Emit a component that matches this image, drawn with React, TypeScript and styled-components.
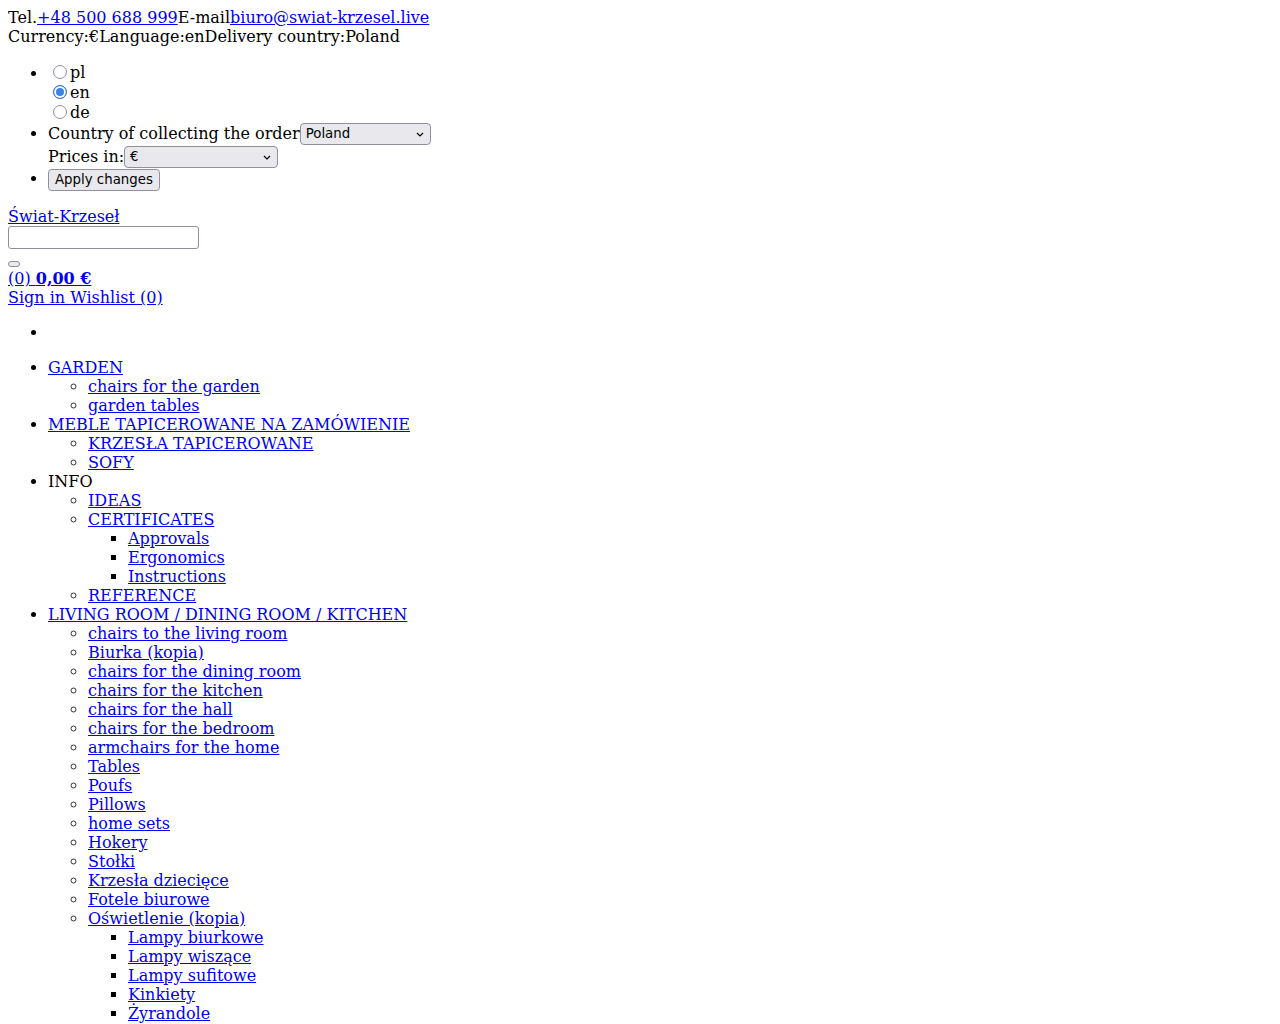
import { createGlobalStyle, styled } from "styled-components";

type MenuItem = {
  label: string;
  link?: boolean;
  children?: MenuItem[];
};

const menu: MenuItem[] = [
  {
    label: "GARDEN",
    children: [{ label: "chairs for the garden" }, { label: "garden tables" }],
  },
  {
    label: "MEBLE TAPICEROWANE NA ZAMÓWIENIE",
    children: [{ label: "KRZESŁA TAPICEROWANE" }, { label: "SOFY" }],
  },
  {
    label: "INFO",
    link: false,
    children: [
      { label: "IDEAS" },
      {
        label: "CERTIFICATES",
        children: [
          { label: "Approvals" },
          { label: "Ergonomics" },
          { label: "Instructions" },
        ],
      },
      { label: "REFERENCE" },
    ],
  },
  {
    label: "LIVING ROOM / DINING ROOM / KITCHEN",
    children: [
      { label: "chairs to the living room" },
      { label: "Biurka (kopia)" },
      { label: "chairs for the dining room" },
      { label: "chairs for the kitchen" },
      { label: "chairs for the hall" },
      { label: "chairs for the bedroom" },
      { label: "armchairs for the home" },
      { label: "Tables" },
      { label: "Poufs" },
      { label: "Pillows" },
      { label: "home sets" },
      { label: "Hokery" },
      { label: "Stołki" },
      { label: "Krzesła dziecięce" },
      { label: "Fotele biurowe" },
      {
        label: "Oświetlenie (kopia)",
        children: [
          { label: "Lampy biurkowe" },
          { label: "Lampy wiszące" },
          { label: "Lampy sufitowe" },
          { label: "Kinkiety" },
          { label: "Żyrandole" },
          { label: "Lampy podłogowe" },
        ],
      },
    ],
  },
];

const GlobalStyle = createGlobalStyle`
  body {
    margin: 8px;
    font-family: "DejaVu Serif", serif;
    font-size: 16px;
    color: #000;
    background: #fff;
  }
  a {
    color: #0000ee;
  }
`;

const Line = styled.div``;

const Options = styled.ul`
  margin: 16px 0;
  padding-left: 40px;
`;

const RadioRow = styled.label`
  display: flex;
  align-items: center;
  height: 20px;
`;

const Radio = styled.input`
  appearance: none;
  box-sizing: border-box;
  width: 14px;
  height: 14px;
  margin: 0 3px 0 5px;
  border: 1px solid #8f8f9d;
  border-radius: 50%;
  background: #fff;

  &:checked {
    border: 1px solid #2f6fd6;
    background: #3b82e6;
    box-shadow: inset 0 0 0 2px #fff;
  }
`;

const ControlRow = styled.div`
  display: flex;
  align-items: center;
  height: 23px;
`;

const SelectWrap = styled.span<{ $width: number }>`
  position: relative;
  display: inline-block;
  width: ${(p) => p.$width}px;
  height: 22px;

  svg {
    position: absolute;
    right: 7px;
    top: 9px;
    pointer-events: none;
  }
`;

const Select = styled.select`
  appearance: none;
  box-sizing: border-box;
  width: 100%;
  height: 22px;
  margin: 0;
  padding: 0 20px 0 5px;
  border: 1px solid #8f8f9d;
  border-radius: 4px;
  background: #e9e9ed;
  color: #000;
  font-family: "DejaVu Sans", sans-serif;
  font-size: 13.3333px;
`;

const Button = styled.button`
  box-sizing: border-box;
  height: 22px;
  margin: 0;
  padding: 0 6px;
  border: 1px solid #8f8f9d;
  border-radius: 4px;
  background: #e9e9ed;
  color: #000;
  font-family: "DejaVu Sans", sans-serif;
  font-size: 13.3333px;
`;

const EmptyButton = styled(Button)`
  width: 12px;
  height: 6px;
  padding: 0;
  border-radius: 3px;
`;

const SearchForm = styled.form`
  margin: 0;
`;

const SearchInput = styled.input`
  display: block;
  box-sizing: border-box;
  width: 191px;
  height: 23px;
  margin: 0;
  border: 1px solid #8f8f9d;
  border-radius: 3px;
  background: #fff;
`;

const ButtonLine = styled.div`
  display: flex;
  align-items: flex-end;
  box-sizing: border-box;
  height: 20px;
  padding-bottom: 2px;
`;

const MenuList = styled.ul<{ $depth: number }>`
  margin: ${(p) => (p.$depth === 0 ? "16px 0" : "0")};
  padding-left: 40px;
  list-style-type: ${(p) =>
    p.$depth === 0 ? "disc" : p.$depth === 1 ? "circle" : "square"};

  & > li::marker {
    color: ${(p) => (p.$depth === 1 ? "#333" : "#000")};
  }
`;

const Chevron = () => (
  <svg width="8" height="5" viewBox="0 0 8 5">
    <path d="M1 1l3 3 3-3" fill="none" stroke="#000" strokeWidth="1.2" />
  </svg>
);

const Menu = ({ items, depth }: { items: MenuItem[]; depth: number }) => (
  <MenuList $depth={depth}>
    {items.map((item, idx) => (
      <li key={idx + item.label}>
        {item.link === false ? item.label : <a href="#">{item.label}</a>}
        {item.children && <Menu items={item.children} depth={depth + 1} />}
      </li>
    ))}
  </MenuList>
);

const App = () => {
  return (
    <>
      <GlobalStyle />
      <Line>
        Tel.<a href="#">+48 500 688 999</a>E-mail
        <a href="#">biuro@swiat-krzesel.live</a>
      </Line>
      <Line>Currency:€Language:enDelivery country:Poland</Line>
      <Options>
        <li>
          <RadioRow>
            <Radio type="radio" name="lang" />pl
          </RadioRow>
          <RadioRow>
            <Radio type="radio" name="lang" defaultChecked />en
          </RadioRow>
          <RadioRow>
            <Radio type="radio" name="lang" />de
          </RadioRow>
        </li>
        <li>
          <ControlRow>
            Country of collecting the order
            <SelectWrap $width={131}>
              <Select defaultValue="pl">
                <option value="pl">Poland</option>
              </Select>
              <Chevron />
            </SelectWrap>
          </ControlRow>
          <ControlRow>
            Prices in:
            <SelectWrap $width={154}>
              <Select defaultValue="eur">
                <option value="eur">€</option>
              </Select>
              <Chevron />
            </SelectWrap>
          </ControlRow>
        </li>
        <li>
          <ControlRow>
            <Button type="button">Apply changes</Button>
          </ControlRow>
        </li>
      </Options>
      <Line>
        <a href="#">Świat-Krzeseł</a>
      </Line>
      <SearchForm>
        <SearchInput type="text" />
      </SearchForm>
      <ButtonLine>
        <EmptyButton type="button" />
      </ButtonLine>
      <Line>
        <a href="#">
          (0) <strong>0,00 €</strong>
        </a>
      </Line>
      <Line>
        <a href="#">Sign in </a>
        <a href="#">Wishlist (0)</a>
      </Line>
      <Options>
        <li></li>
      </Options>
      <Menu items={menu} depth={0} />
    </>
  );
};

export default App;
